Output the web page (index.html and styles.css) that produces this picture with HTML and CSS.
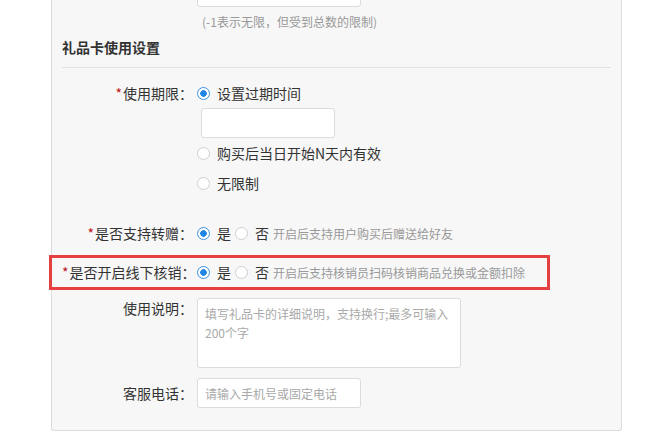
FILE: index.html
```html
<!DOCTYPE html>
<html lang="zh-CN">
<head>
    <meta charset="UTF-8">
    <meta name="viewport" content="width=device-width, initial-scale=1.0">
    <title>礼品卡设置</title>
    <link rel="stylesheet" href="styles.css">
</head>
<body>
   <div class="panel">
    <div class="row">
        <div class="label"></div>
        <div class="field">
            <input class="text-input" type="text">
            <div class="tip">(-1表示无限，但受到总数的限制)</div>
        </div>
    </div>

    <h3 class="section-title">礼品卡使用设置</h3>

    <div class="row row-expire">
        <div class="label"><span class="req">*</span>使用期限：</div>
        <div class="field">
            <div class="option-line"><span class="radio checked"></span><span class="option-text">设置过期时间</span></div>
            <input class="text-input date-input" type="text">
            <div class="option-line"><span class="radio"></span><span class="option-text">购买后当日开始N天内有效</span></div>
            <div class="option-line"><span class="radio"></span><span class="option-text">无限制</span></div>
        </div>
    </div>

    <div class="row row-gift">
        <div class="label"><span class="req">*</span>是否支持转赠：</div>
        <div class="field">
            <div class="option-line">
                <span class="radio checked"></span><span class="option-text gap">是</span>
                <span class="radio"></span><span class="option-text">否</span>
                <span class="inline-tip">开启后支持用户购买后赠送给好友</span>
            </div>
        </div>
    </div>

    <div class="row row-verify">
        <div class="label"><span class="req">*</span>是否开启线下核销：</div>
        <div class="field">
            <div class="option-line">
                <span class="radio checked"></span><span class="option-text gap">是</span>
                <span class="radio"></span><span class="option-text">否</span>
                <span class="inline-tip">开启后支持核销员扫码核销商品兑换或金额扣除</span>
            </div>
        </div>
        <span class="mark"></span>
    </div>

    <div class="row row-desc">
        <div class="label">使用说明：</div>
        <div class="field">
            <textarea class="text-area" placeholder="填写礼品卡的详细说明，支持换行;最多可输入200个字"></textarea>
        </div>
    </div>

    <div class="row row-tel">
        <div class="label">客服电话：</div>
        <div class="field">
            <input class="text-input" type="text" placeholder="请输入手机号或固定电话">
        </div>
    </div>
   </div>
</body>
</html>
```

FILE: styles.css
```css
 *{
     margin:0;
     padding:0;
     box-sizing:border-box;
 }
 body{
     background:#fff;
     font-family:"Microsoft YaHei","Noto Sans CJK SC",sans-serif;
     font-size:14px;
     color:#333;
 }
 .panel{
     width:571px;
     margin-left:51px;
     margin-top:-23px;
     padding:0 10px 22px 10px;
     background:#f7f7f7;
     border:1px solid #dcdcdc;
     border-top:none;
     border-radius:0 0 3px 3px;
 }
 .row{
     display:flex;
     align-items:flex-start;
 }
 .label{
     width:135px;
     padding-right:4px;
     text-align:right;
     line-height:30px;
     white-space:nowrap;
     flex-shrink:0;
 }
 .req{
     color:#c0151b;
     margin-right:1px;
 }
 .field{
     display:flex;
     flex-direction:column;
     align-items:flex-start;
 }
 .text-input{
     width:164px;
     height:30px;
     border:1px solid #dcdcdc;
     border-radius:3px;
     background:#fff;
     padding:0 7px;
     font-family:inherit;
     font-size:12px;
     color:#333;
     outline:none;
 }
 .text-input::placeholder,.text-area::placeholder{
     color:#a9a9a9;
 }
 .tip{
     margin-top:6px;
     padding-left:5px;
     font-size:12px;
     line-height:18px;
     color:#999;
 }
 .section-title{
     margin-top:6px;
     padding-bottom:10px;
     border-bottom:1px solid #e2e2e2;
     font-size:14px;
     line-height:20px;
     font-weight:bold;
     color:#333;
 }
 .row-expire{
     margin-top:10px;
 }
 .option-line{
     height:30px;
     display:flex;
     align-items:center;
     white-space:nowrap;
 }
 .radio{
     width:13px;
     height:13px;
     border:1px solid #cfcfcf;
     border-radius:50%;
     background:#fff;
     flex-shrink:0;
 }
 .radio.checked{
     border-color:#3a94e8;
     background:radial-gradient(circle,#1f86e6 3px,#fff 3.6px);
 }
 .option-text{
     margin-left:7px;
 }
 .option-text.gap{
     margin-right:4px;
 }
 .inline-tip{
     margin-left:4px;
     font-size:12px;
     color:#999;
 }
 .date-input{
     width:134px;
     margin-left:4px;
 }
 .row-gift{
     margin-top:20px;
 }
 .row-verify{
     margin-top:9px;
     position:relative;
 }
 .mark{
     position:absolute;
     left:-13px;
     top:-2px;
     width:501px;
     height:35px;
     border:3px solid #e5403f;
     pointer-events:none;
 }
 .row-desc{
     margin-top:11px;
 }
 .row-desc .label{
     line-height:20px;
 }
 .text-area{
     width:264px;
     height:70px;
     border:1px solid #dcdcdc;
     border-radius:3px;
     background:#fff;
     padding:5px 7px;
     font-family:inherit;
     font-size:12px;
     line-height:19px;
     resize:none;
     outline:none;
 }
 .row-tel{
     margin-top:10px;
 }
```
